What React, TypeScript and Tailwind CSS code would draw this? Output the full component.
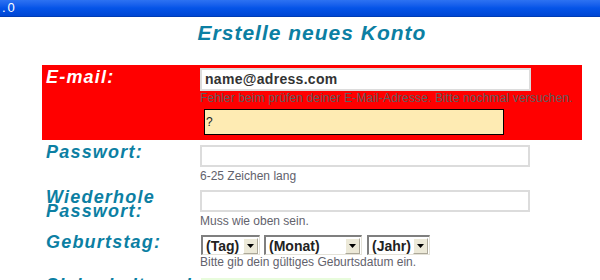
import React from 'react'

const teal = 'text-[#0c7fa3]'

function Label({ children, white }: { children: React.ReactNode; white?: boolean }) {
  return (
    <div
      className={`w-[158px] shrink-0 pl-[4px] text-[18px] leading-[14px] font-bold italic tracking-[1.2px] ${white ? 'text-white' : teal}`}
    >
      {children}
    </div>
  )
}

function TextBox({ value }: { value?: string }) {
  return (
    <div className="w-[330px] h-[22px] border-2 border-[#dcdcdc] bg-white px-[3px] flex items-center text-[14px] font-bold tracking-[0.3px] text-[#333]">
      {value}
    </div>
  )
}

function Hint({ children }: { children: React.ReactNode }) {
  return <div className="text-[12px] leading-[14px] text-[#62626c] whitespace-nowrap">{children}</div>
}

function Dropdown({ label, width }: { label: string; width: string }) {
  return (
    <div
      className={`${width} h-[20px] flex items-start bg-white border-t-2 border-l-2 border-b border-r border-t-[#7f7f7f] border-l-[#7f7f7f] border-b-[#e4e2d8] border-r-[#e4e2d8] pt-[1px] pr-[1px]`}
    >
      <div className="flex-1 overflow-hidden whitespace-nowrap pl-[3px] text-[14px] leading-[16px] font-bold text-[#222]">
        {label}
      </div>
      <div className="w-[15px] h-[16px] shrink-0 flex items-center justify-center bg-[#ece9d8] border border-t-white border-l-white border-b-[#aca899] border-r-[#aca899]">
        <svg width="7" height="4" viewBox="0 0 7 4">
          <path d="M0 0h7L3.5 4z" fill="#000" />
        </svg>
      </div>
    </div>
  )
}

export default function App() {
  return (
    <div className="w-[600px] h-[280px] overflow-hidden bg-white font-['Liberation_Sans',Arial,sans-serif]">
      <div className="h-[17px] bg-gradient-to-b from-[#2d72f2] via-[#0554e8] to-[#0046d4] border-b border-[#003cb4] pl-[2px] text-[13px] leading-[15px] tracking-[2px] text-white">
        .0
      </div>

      <div className="ml-[42px] w-[540px]">
        <h1 className={`mt-[4px] mb-[20px] text-center text-[21px] leading-[24px] font-bold italic tracking-[1px] ${teal}`}>
          Erstelle neues Konto
        </h1>

        <div className="flex h-[75px] bg-[#ff0000]">
          <div className="pt-[5px]">
            <Label white>E-mail:</Label>
          </div>
          <div className="pt-[3px]">
            <div className="w-[331px] h-[23px] border-2 border-[#dcdcdc] bg-white px-[3px] flex items-center text-[14px] font-bold tracking-[0.3px] text-[#333]">
              name@adress.com
            </div>
            <div className="text-[12px] leading-[14px] text-[#5e5e5e] tracking-[0.13px] whitespace-nowrap">
              Fehler beim prüfen deiner E-Mail-Adresse. Bitte nochmal versuchen.
            </div>
            <div className="ml-[4px] mt-[4px] w-[300px] h-[26px] border border-black bg-[#feebb3] pl-[1px] flex items-center text-[12px] text-[#222]">
              ?
            </div>
          </div>
        </div>

        <div className="flex mt-[5px]">
          <Label>Passwort:</Label>
          <div>
            <TextBox />
            <div className="mt-[2px]">
              <Hint>6-25 Zeichen lang</Hint>
            </div>
          </div>
        </div>

        <div className="flex mt-[7px]">
          <Label>
            Wiederhole
            <br />
            Passwort:
          </Label>
          <div>
            <TextBox />
            <div className="mt-[2px]">
              <Hint>Muss wie oben sein.</Hint>
            </div>
          </div>
        </div>

        <div className="flex mt-[7px]">
          <Label>Geburtstag:</Label>
          <div>
            <div className="flex ml-[1px]">
              <Dropdown label="(Tag)" width="w-[59px]" />
              <div className="ml-[4px]">
                <Dropdown label="(Monat)" width="w-[98px]" />
              </div>
              <div className="ml-[5px]">
                <Dropdown label="(Jahr)" width="w-[63px]" />
              </div>
            </div>
            <Hint>Bitte gib dein gültiges Geburtsdatum ein.</Hint>
          </div>
        </div>

        <div className="flex mt-[9px]">
          <Label>Sicherheitscode:</Label>
          <div className="ml-[1px] w-[150px] h-[24px] bg-[#e8fcdc]" />
        </div>
      </div>
    </div>
  )
}
